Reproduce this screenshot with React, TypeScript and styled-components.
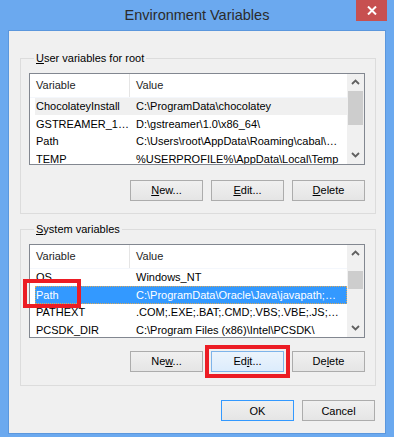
import React from 'react';
import styled, { createGlobalStyle } from 'styled-components';

const GlobalStyle = createGlobalStyle`
    html, body {
        margin: 0;
        padding: 0;
        background: #6ba9ef;
    }
    body {
        font-family: "Liberation Sans", Arial, sans-serif;
        font-size: 11px;
        color: #000000;
    }
`;

const Window = styled.div`
    width: 394px;
    height: 437px;
    box-sizing: border-box;
    background-color: #6ba9ef;
    padding: 0 8px 7px 8px;
    display: flex;
    flex-direction: column;
`;

const TitleBar = styled.div`
    height: 30px;
    display: grid;
    grid-template-columns: 1fr auto 1fr;
    align-items: start;
`;

const Title = styled.div`
    grid-column: 2;
    font-size: 14.5px;
    color: #2b2b2b;
    line-height: 30px;
`;

const CloseButton = styled.div`
    grid-column: 3;
    justify-self: end;
    margin-right: -1px;
    width: 31px;
    height: 21px;
    background-color: #c75050;
    display: flex;
    align-items: center;
    justify-content: center;
`;

const Client = styled.div`
    flex: 1;
    background-color: #f0f0f0;
    border: 1px solid #5b97dd;
    padding: 19.5px 9px 12px 11px;
    display: flex;
    flex-direction: column;
`;

const Group = styled.fieldset<{ $gap?: number; $bottom?: number }>`
    margin: ${p => p.$gap || 0}px 0 0 0;
    border: 1px solid #dcdcdc;
    padding: 7px 10px ${p => p.$bottom || 12}px 8px;
    min-width: 0;
`;

const Legend = styled.legend`
    padding: 0 2px;
    margin-left: 5px;
    line-height: 15px;
    color: #000000;
`;

const ListFrame = styled.div<{ $height: number }>`
    position: relative;
    height: ${p => p.$height}px;
    border: 1px solid #828790;
    background-color: #ffffff;
    display: grid;
    grid-template-columns: 1fr 17px;
`;

const ListBody = styled.div`
    overflow: hidden;
    min-width: 0;
`;

const Header = styled.div`
    height: 23px;
    display: grid;
    grid-template-columns: 100px 1fr;
    border-bottom: 1px solid #f4f7fc;
`;

const HeaderCell = styled.div<{ $divider?: boolean }>`
    padding-left: 6px;
    line-height: 23px;
    color: #1e1e1e;
    border-right: ${p => (p.$divider ? '1px solid #e5e5e5' : 'none')};
`;

const Row = styled.div<{ $state?: 'active' | 'inactive' }>`
    position: relative;
    box-sizing: border-box;
    height: 17.5px;
    margin-left: 5px;
    display: grid;
    grid-template-columns: 94px 1fr;
    align-items: center;
    white-space: nowrap;
    background-color: ${p =>
        p.$state === 'active' ? '#3399ff' : p.$state === 'inactive' ? '#f0f0f0' : 'transparent'};
    color: ${p => (p.$state === 'active' ? '#ffffff' : '#000000')};
    border: 1px dotted ${p => (p.$state === 'active' ? '#d9a85a' : 'transparent')};
`;

const Cell = styled.div<{ $value?: boolean }>`
    padding-left: ${p => (p.$value ? 6 : 0)}px;
    padding-right: ${p => (p.$value ? 6 : 0)}px;
    overflow: hidden;
    text-overflow: ellipsis;
`;

const Scrollbar = styled.div`
    background-color: #f0f0f0;
    display: flex;
    flex-direction: column;
`;

const Arrow = styled.div`
    height: 17px;
    display: flex;
    align-items: center;
    justify-content: center;
    flex-shrink: 0;
`;

const Track = styled.div`
    flex: 1;
`;

const Thumb = styled.div<{ $offset: number; $size: number }>`
    margin: ${p => p.$offset}px 1px 0 1px;
    height: ${p => p.$size}px;
    background-color: #cdcdcd;
`;

const Marker = styled.div<{ $left: number; $top: number; $width: number; $height: number }>`
    position: absolute;
    left: ${p => p.$left}px;
    top: ${p => p.$top}px;
    width: ${p => p.$width}px;
    height: ${p => p.$height}px;
    box-sizing: border-box;
    border: 4px solid #ec1c24;
    pointer-events: none;
`;

const ButtonRow = styled.div<{ $top: number; $right?: number }>`
    display: flex;
    justify-content: flex-end;
    gap: 8px;
    margin-top: ${p => p.$top}px;
    margin-right: ${p => p.$right || 0}px;
`;

const Button = styled.div<{ $variant?: 'hot' | 'default'; $marked?: boolean }>`
    width: 73px;
    height: 21px;
    box-sizing: border-box;
    display: flex;
    align-items: center;
    justify-content: center;
    color: #000000;
    border: 1px solid
        ${p => (p.$variant === 'hot' ? '#7eb4ea' : p.$variant === 'default' ? '#3399ff' : '#acacac')};
    background: ${p =>
        p.$variant === 'hot'
            ? 'linear-gradient(#ecf4fc, #dcecfc)'
            : 'linear-gradient(#f0f0f0, #e5e5e5)'};
    outline: ${p => (p.$marked ? '4px solid #ec1c24' : 'none')};
    outline-offset: 2px;
`;

type Entry = { name: string; value: string; state?: 'active' | 'inactive' };

const userVars: Entry[] = [
    { name: 'ChocolateyInstall', value: 'C:\\ProgramData\\chocolatey', state: 'inactive' },
    { name: 'GSTREAMER_1_0_ROOT_X86_64', value: 'D:\\gstreamer\\1.0\\x86_64\\' },
    { name: 'Path', value: 'C:\\Users\\root\\AppData\\Roaming\\cabal\\bin;C:\\tools' },
    { name: 'TEMP', value: '%USERPROFILE%\\AppData\\Local\\Temp' },
];

const systemVars: Entry[] = [
    { name: 'OS', value: 'Windows_NT' },
    { name: 'Path', value: 'C:\\ProgramData\\Oracle\\Java\\javapath;C:\\Windows', state: 'active' },
    { name: 'PATHEXT', value: '.COM;.EXE;.BAT;.CMD;.VBS;.VBE;.JS;.JSE;.WSF' },
    { name: 'PCSDK_DIR', value: 'C:\\Program Files (x86)\\Intel\\PCSDK\\' },
];

const Chevron = ({ down }: { down?: boolean }) => (
    <svg width="9" height="6" viewBox="0 0 9 6">
        <polyline
            points={down ? '1,1 4.5,4.5 8,1' : '1,5 4.5,1.5 8,5'}
            fill="none"
            stroke="#606060"
            strokeWidth="1.8"
        />
    </svg>
);

const VariableList = ({
    entries,
    height,
    thumbOffset,
    thumbSize,
    children,
}: {
    entries: Entry[];
    height: number;
    thumbOffset: number;
    thumbSize: number;
    children?: React.ReactNode;
}) => (
    <ListFrame $height={height}>
        <ListBody>
            <Header>
                <HeaderCell $divider>Variable</HeaderCell>
                <HeaderCell>Value</HeaderCell>
            </Header>
            {entries.map(e => (
                <Row key={e.name} $state={e.state}>
                    <Cell>{e.name}</Cell>
                    <Cell $value>{e.value}</Cell>
                </Row>
            ))}
        </ListBody>
        <Scrollbar>
            <Arrow>
                <Chevron />
            </Arrow>
            <Track>
                <Thumb $offset={thumbOffset} $size={thumbSize} />
            </Track>
            <Arrow>
                <Chevron down />
            </Arrow>
        </Scrollbar>
        {children}
    </ListFrame>
);

const App = () => (
    <Window>
        <GlobalStyle />
        <TitleBar>
            <Title>Environment Variables</Title>
            <CloseButton>
                <svg width="10" height="9" viewBox="0 0 10 9">
                    <path d="M1 0.5 L9 8.5 M9 0.5 L1 8.5" stroke="#ffffff" strokeWidth="2" />
                </svg>
            </CloseButton>
        </TitleBar>
        <Client>
            <Group>
                <Legend>
                    <u>U</u>ser variables for root
                </Legend>
                <VariableList entries={userVars} height={90} thumbOffset={0} thumbSize={34} />
                <ButtonRow $top={15}>
                    <Button>
                        <span><u>N</u>ew...</span>
                    </Button>
                    <Button>
                        <span><u>E</u>dit...</span>
                    </Button>
                    <Button>
                        <span><u>D</u>elete</span>
                    </Button>
                </ButtonRow>
            </Group>
            <Group $gap={8} $bottom={13.5}>
                <Legend>
                    <u>S</u>ystem variables
                </Legend>
                <VariableList entries={systemVars} height={92} thumbOffset={9} thumbSize={18}>
                    <Marker $left={-7} $top={34.5} $width={58} $height={29} />
                </VariableList>
                <ButtonRow $top={13}>
                    <Button>
                        <span>Ne<u>w</u>...</span>
                    </Button>
                    <Button $variant="hot" $marked>
                        <span>Ed<u>i</u>t...</span>
                    </Button>
                    <Button>
                        <span>De<u>l</u>ete</span>
                    </Button>
                </ButtonRow>
            </Group>
            <ButtonRow $top={14} $right={1}>
                <Button $variant="default">OK</Button>
                <Button>Cancel</Button>
            </ButtonRow>
        </Client>
    </Window>
);

export default App;
